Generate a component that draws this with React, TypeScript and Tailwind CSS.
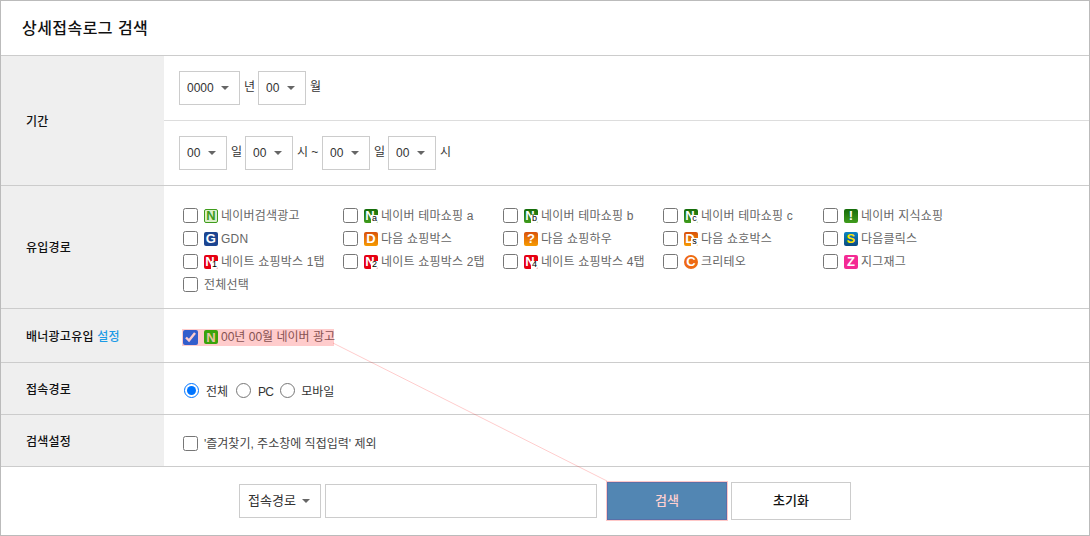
const font = "font-['Liberation_Sans','Noto_Sans_CJK_KR',sans-serif]";

function Arrow() {
  return <span className="pointer-events-none absolute right-[11px] top-1/2 -mt-[2px] h-0 w-0 border-x-[4px] border-t-[4px] border-x-transparent border-t-[#666]" />;
}

function Select({ value, w, size = "text-[12px] pl-[7px]" }: { value: string; w: string; size?: string }) {
  return (
    <div className={`relative h-[34px] shrink-0 ${w}`}>
      <select className={`h-full w-full appearance-none rounded-none border border-[#ccc] bg-white text-[#333] outline-none ${size}`}>
        <option>{value}</option>
      </select>
      <Arrow />
    </div>
  );
}

type IconProps = { bg: string; letter: string; sub?: string; round?: boolean; fg?: string };

function Icon({ bg, letter, sub, round, fg = "text-white" }: IconProps) {
  return (
    <span className={`relative flex h-[14px] w-[14px] shrink-0 items-center justify-center overflow-hidden ${round ? "rounded-full" : "rounded-[2px]"} ${bg}`}>
      <span className={`font-['Liberation_Sans',sans-serif] text-[13px] leading-none font-bold ${fg} ${sub ? "-translate-x-[1px]" : ""}`}>{letter}</span>
      {sub && (
        <span className="absolute right-0 bottom-0 flex h-[8px] w-[7px] items-center justify-center bg-white font-['Liberation_Sans',sans-serif] text-[9px] leading-none text-black">
          {sub}
        </span>
      )}
    </span>
  );
}

const green = "bg-gradient-to-b from-[#146c0a] to-[#3f9c1c]";
const red = "bg-[#e60012]";
const orange = "bg-gradient-to-b from-[#d9500a] to-[#f59a00]";

const sources: { label: string; icon?: IconProps }[] = [
  { label: "네이버검색광고", icon: { bg: "border border-[#3f9c1c] bg-[#dcefcc]", letter: "N", fg: "text-[#3f9c1c]" } },
  { label: "네이버 테마쇼핑 a", icon: { bg: green, letter: "N", sub: "a" } },
  { label: "네이버 테마쇼핑 b", icon: { bg: green, letter: "N", sub: "b" } },
  { label: "네이버 테마쇼핑 c", icon: { bg: green, letter: "N", sub: "c" } },
  { label: "네이버 지식쇼핑", icon: { bg: green, letter: "!" } },
  { label: "GDN", icon: { bg: "bg-[#1c4591]", letter: "G" } },
  { label: "다음 쇼핑박스", icon: { bg: orange, letter: "D" } },
  { label: "다음 쇼핑하우", icon: { bg: orange, letter: "?" } },
  { label: "다음 쇼호박스", icon: { bg: orange, letter: "D", sub: "s" } },
  { label: "다음클릭스", icon: { bg: "bg-gradient-to-b from-[#0a84c4] to-[#0a4a80]", letter: "S", fg: "text-[#ffe600]" } },
  { label: "네이트 쇼핑박스 1탭", icon: { bg: red, letter: "N", sub: "1" } },
  { label: "네이트 쇼핑박스 2탭", icon: { bg: red, letter: "N", sub: "2" } },
  { label: "네이트 쇼핑박스 4탭", icon: { bg: red, letter: "N", sub: "4" } },
  { label: "크리테오", icon: { bg: "bg-[#ee6a13]", letter: "C", round: true } },
  { label: "지그재그", icon: { bg: "bg-[#f42a94]", letter: "Z" } },
  { label: "전체선택" },
];

function Row({ label, h, children }: { label: React.ReactNode; h: string; children: React.ReactNode }) {
  return (
    <div className={`flex border-b border-[#ccc] ${h}`}>
      <div className="flex w-[163px] shrink-0 items-center bg-[#efefef] pt-[2px] pl-[25px] text-[12px] font-medium tracking-[0.25px] text-[#111]">{label}</div>
      <div className="min-w-0 flex-1">{children}</div>
    </div>
  );
}

function Unit({ children, w }: { children: React.ReactNode; w: string }) {
  return <span className={`shrink-0 pb-[2px] pl-[4px] text-[12px] text-[#333] ${w}`}>{children}</span>;
}

export default function App() {
  return (
    <div className={`relative h-[536px] w-[1090px] overflow-hidden border border-[#bbb] bg-white ${font}`}>
      <div className="flex h-[55px] items-center border-b border-[#ccc] pt-[2px] pl-[21px] text-[16px] font-medium tracking-[0.45px] text-[#111]">상세접속로그 검색</div>

      <Row label="기간" h="h-[130px]">
        <div className="flex h-[65px] items-center border-b border-[#ddd] pb-[1px] pl-[15px]">
          <Select value="0000" w="w-[61px]" />
          <Unit w="w-[18px]">년</Unit>
          <Select value="00" w="w-[48px]" />
          <Unit w="w-[18px]">월</Unit>
        </div>
        <div className="flex h-[64px] items-center pl-[15px]">
          <Select value="00" w="w-[48px]" />
          <Unit w="w-[18px]">일</Unit>
          <Select value="00" w="w-[48px]" />
          <Unit w="w-[29px]">시 ~</Unit>
          <Select value="00" w="w-[48px]" />
          <Unit w="w-[18px]">일</Unit>
          <Select value="00" w="w-[48px]" />
          <Unit w="w-[18px]">시</Unit>
        </div>
      </Row>

      <Row label="유입경로" h="h-[123px]">
        <div className="grid auto-rows-[23px] grid-cols-[repeat(5,160px)] pt-[18px] pl-[19px]">
          {sources.map((s) => (
            <label key={s.label} className="flex h-[23px] items-center text-[12px] tracking-[0.2px] text-[#666]">
              <input type="checkbox" className="m-0 h-[15px] w-[15px] shrink-0" />
              <span className="ml-[6px] flex items-center gap-[3px]">
                {s.icon && <Icon {...s.icon} />}
                {s.label}
              </span>
            </label>
          ))}
        </div>
      </Row>

      <Row label={<>배너광고유입&nbsp;<span className="text-[#1c9be6]">설정</span></>} h="h-[54px]">
        <label className="flex h-full items-center pt-[3px] pl-[19px] text-[12px] text-[#666]">
          <input type="checkbox" defaultChecked className="m-0 h-[15px] w-[15px] shrink-0" />
          <span className="ml-[6px] flex items-center gap-[3px]">
            <Icon bg="bg-[#08cc0c]" letter="N" fg="text-[#e4f5c8]" />
            00년 00월 네이버 광고
          </span>
        </label>
      </Row>

      <Row label="접속경로" h="h-[52px]">
        <div className="flex h-full items-center pt-[3px] pl-[20px] text-[12px] text-[#333]">
          <input type="radio" name="path" defaultChecked className="m-0 h-[15px] w-[15px]" />
          <span className="mt-[3px] mr-[8px] ml-[7px]">전체</span>
          <input type="radio" name="path" className="m-0 h-[15px] w-[15px]" />
          <span className="mt-[3px] mr-[7px] ml-[7px] tracking-[-0.8px]">PC</span>
          <input type="radio" name="path" className="m-0 h-[15px] w-[15px]" />
          <span className="mt-[3px] ml-[6px]">모바일</span>
        </div>
      </Row>

      <Row label="검색설정" h="h-[52px]">
        <label className="flex h-full items-center pt-[5px] pl-[19px] text-[12px] text-[#444]">
          <input type="checkbox" className="m-0 h-[15px] w-[15px]" />
          <span className="mt-[2px] ml-[6px]">'즐겨찾기, 주소창에 직접입력' 제외</span>
        </label>
      </Row>

      <div className="flex h-[68px] items-center pl-[238px]">
        <Select value="접속경로" w="w-[82px]" size="pl-[8px] text-[13px]" />
        <input className="ml-[4px] h-[34px] w-[272px] border border-[#ccc] bg-white outline-none" />
        <button className="ml-[10px] h-[38px] w-[120px] border border-[#5a70a8] bg-[#5286b3] text-[13px] font-medium text-[#ffd0d0] shadow-[0_0_0_1px_#ffc8c8]">검색</button>
        <button className="ml-[4px] h-[38px] w-[120px] border border-[#ccc] bg-white text-[13px] font-medium text-[#111]">초기화</button>
      </div>

      {/* Pink highlight over the banner row and its connector */}
      <div className="pointer-events-none absolute top-[328px] left-[181px] h-[17px] w-[152px] bg-[#ff0000]/20" />
      <svg className="pointer-events-none absolute top-[-1px] left-[-1px]" width="1090" height="536">
        <line x1="333" y1="343" x2="607" y2="481" stroke="#ff0000" strokeOpacity="0.2" />
      </svg>
    </div>
  );
}
